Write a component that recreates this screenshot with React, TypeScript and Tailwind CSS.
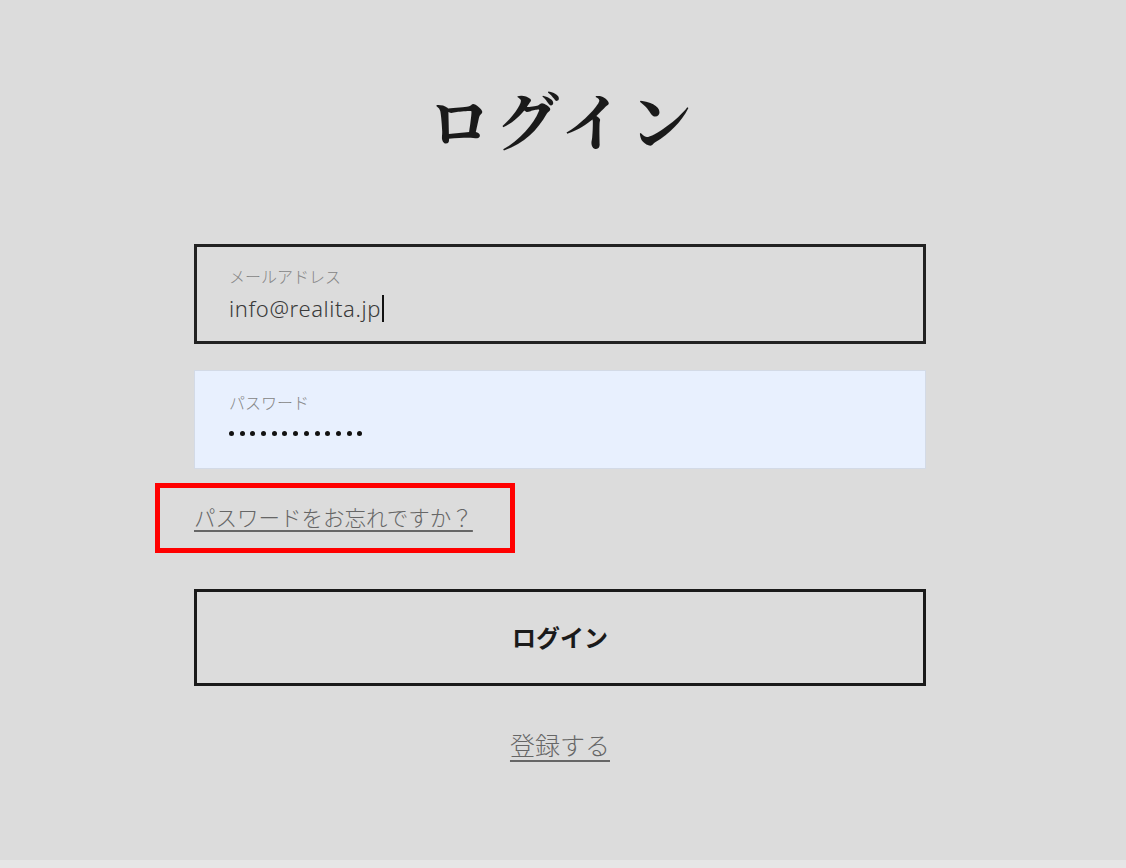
import React from "react";

const sans = { fontFamily: '"Noto Sans", "Noto Sans CJK JP", sans-serif' };
const serif = { fontFamily: '"Noto Serif CJK JP", "Liberation Serif", "Noto Sans CJK JP", serif' };

export default function App() {
  const dots = Array.from({ length: 13 });
  return (
    <div className="w-full min-h-[868px] flex flex-col bg-[#e6e6e6]" style={sans}>
      <div className="h-[860px] bg-[#dcdcdc] flex flex-col items-center pr-[6px]">
        <h1
          className="mt-[81px] text-[63px] leading-[74px] font-bold text-[#1a1a1a] tracking-[5px] pl-[5px]"
          style={serif}
        >
          ログイン
        </h1>
        <div className="mt-[89px] w-[732px] flex flex-col">
          <div className="h-[100px] border-[3px] border-[#222] px-[32px] pt-[19px] flex flex-col">
            <span className="text-[16px] leading-[22px] text-[#858585] font-light">メールアドレス</span>
            <span className="mt-[5px] text-[22px] leading-[30px] text-[#3a3a3a] font-light tracking-[0.6px] flex items-center">
              info@realita.jp<span className="inline-block w-[2px] h-[27px] bg-[#111] ml-[1px]"></span>
            </span>
          </div>
          <div className="mt-[26px] h-[99px] bg-[#e8f0fe] border border-[#d3dae6] px-[34px] pt-[21px] flex flex-col">
            <span className="text-[16px] leading-[22px] text-[#858585] font-light">パスワード</span>
            <div className="mt-[17px] flex gap-[5.7px]">
              {dots.map((_, i) => (
                <span key={i} className="w-[5px] h-[5px] rounded-full bg-[#111]"></span>
              ))}
            </div>
          </div>
          <div className="relative mt-[34px] h-[30px] flex items-center">
            <a href="#" className="text-[21.5px] leading-[28px] text-[#666] font-light underline underline-offset-[4px]">
              パスワードをお忘れですか？
            </a>
            <div className="absolute left-[-39px] top-[-20px] w-[360px] h-[70px] border-[5px] border-[#ff0000] pointer-events-none"></div>
          </div>
          <button className="mt-[56px] h-[97px] border-[3px] border-[#1a1a1a] flex items-center justify-center text-[24px] font-bold text-[#1a1a1a]">
            ログイン
          </button>
          <div className="mt-[42px] flex justify-center">
            <a href="#" className="text-[25px] leading-[34px] text-[#666] font-light underline underline-offset-[5px]">
              登録する
            </a>
          </div>
        </div>
      </div>
    </div>
  );
}
